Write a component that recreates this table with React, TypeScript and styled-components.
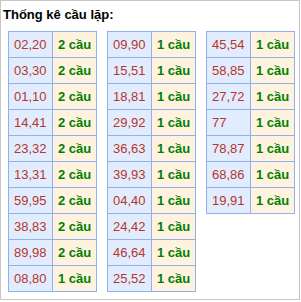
import React from "react";
import styled, { createGlobalStyle } from "styled-components";

const Global = createGlobalStyle`
  html, body { margin: 0; padding: 0; background: #fff; }
  body { font-family: "Liberation Sans", Arial, sans-serif; }
`;

const Panel = styled.div`
  box-sizing: border-box;
  width: 300px;
  height: 300px;
  border: 1px solid #c6c6c6;
  background: #fff;
`;

const Title = styled.div`
  font-size: 13px;
  font-weight: bold;
  color: #000;
  line-height: 16px;
  padding: 6px 0 0 2px;
  height: 25px;
  box-sizing: border-box;
`;

const Columns = styled.div`
  display: flex;
  align-items: flex-start;
  gap: 10px;
  padding: 5px 0 0 7px;
`;

const Table = styled.table`
  border-collapse: collapse;
  font-size: 13px;
`;

const Cell = styled.td<{ $kind: "num" | "count" }>`
  box-sizing: border-box;
  width: 44px;
  height: 26px;
  padding: 0 0 0 5px;
  text-align: left;
  vertical-align: middle;
  white-space: nowrap;
  border: 1px solid #8fb2ef;
  background: ${(p) => (p.$kind === "num" ? "#e1edff" : "#fff3e0")};
  color: ${(p) => (p.$kind === "num" ? "#b8352a" : "#008000")};
  font-weight: ${(p) => (p.$kind === "num" ? "normal" : "bold")};
`;

const data: [string, string][][] = [
  [
    ["02,20", "2 cầu"],
    ["03,30", "2 cầu"],
    ["01,10", "2 cầu"],
    ["14,41", "2 cầu"],
    ["23,32", "2 cầu"],
    ["13,31", "2 cầu"],
    ["59,95", "2 cầu"],
    ["38,83", "2 cầu"],
    ["89,98", "2 cầu"],
    ["08,80", "1 cầu"],
  ],
  [
    ["09,90", "1 cầu"],
    ["15,51", "1 cầu"],
    ["18,81", "1 cầu"],
    ["29,92", "1 cầu"],
    ["36,63", "1 cầu"],
    ["39,93", "1 cầu"],
    ["04,40", "1 cầu"],
    ["24,42", "1 cầu"],
    ["46,64", "1 cầu"],
    ["25,52", "1 cầu"],
  ],
  [
    ["45,54", "1 cầu"],
    ["58,85", "1 cầu"],
    ["27,72", "1 cầu"],
    ["77", "1 cầu"],
    ["78,87", "1 cầu"],
    ["68,86", "1 cầu"],
    ["19,91", "1 cầu"],
  ],
];

export default function App() {
  return (
    <>
      <Global />
      <Panel>
        <Title>Thống kê cầu lặp:</Title>
        <Columns>
          {data.map((col, i) => (
            <Table key={i}>
              <tbody>
                {col.map(([n, c]) => (
                  <tr key={n}>
                    <Cell $kind="num">{n}</Cell>
                    <Cell $kind="count">{c}</Cell>
                  </tr>
                ))}
              </tbody>
            </Table>
          ))}
        </Columns>
      </Panel>
    </>
  );
}
